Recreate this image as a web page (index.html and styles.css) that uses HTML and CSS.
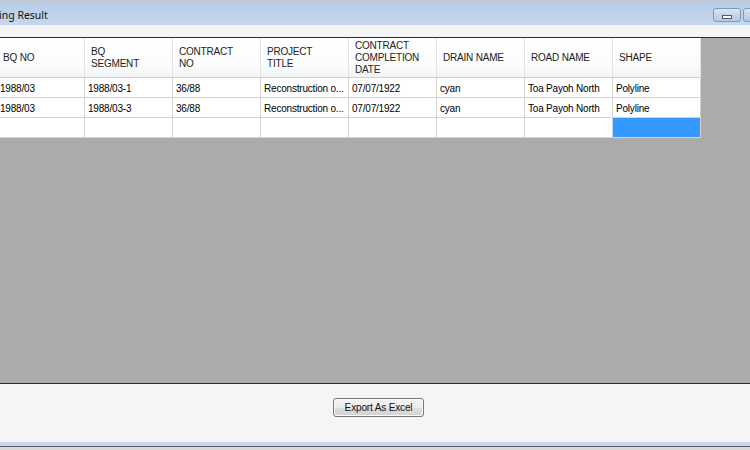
FILE: index.html
```html
<!DOCTYPE html>
<html>
<head>
<meta charset="utf-8">
<link rel="stylesheet" href="styles.css">
</head>
<body>
<div class="window">
  <div class="titlebar">
    <span class="title">ing Result</span>
    <div class="caption-btns">
      <span class="cbtn"><i class="min-glyph"></i></span>
      <span class="cbtn"></span>
    </div>
  </div>
  <div class="strip"></div>
  <div class="gridarea">
    <div class="grid">
      <div class="hcell">BQ NO</div>
      <div class="hcell">BQ<br>SEGMENT</div>
      <div class="hcell">CONTRACT<br>NO</div>
      <div class="hcell">PROJECT<br>TITLE</div>
      <div class="hcell">CONTRACT<br>COMPLETION<br>DATE</div>
      <div class="hcell">DRAIN NAME</div>
      <div class="hcell">ROAD NAME</div>
      <div class="hcell">SHAPE</div>

      <div class="cell">1988/03</div>
      <div class="cell">1988/03-1</div>
      <div class="cell">36/88</div>
      <div class="cell">Reconstruction o...</div>
      <div class="cell">07/07/1922</div>
      <div class="cell">cyan</div>
      <div class="cell">Toa Payoh North</div>
      <div class="cell">Polyline</div>

      <div class="cell">1988/03</div>
      <div class="cell">1988/03-3</div>
      <div class="cell">36/88</div>
      <div class="cell">Reconstruction o...</div>
      <div class="cell">07/07/1922</div>
      <div class="cell">cyan</div>
      <div class="cell">Toa Payoh North</div>
      <div class="cell">Polyline</div>

      <div class="cell"></div>
      <div class="cell"></div>
      <div class="cell"></div>
      <div class="cell"></div>
      <div class="cell"></div>
      <div class="cell"></div>
      <div class="cell"></div>
      <div class="cell selected"></div>
    </div>
  </div>
  <div class="panel">
    <button class="btn">Export As Excel</button>
  </div>
  <div class="band"></div>
  <div class="band-line"></div>
  <div class="below"></div>
</div>
</body>
</html>
```

FILE: styles.css
```css
html, body {
  margin: 0;
  padding: 0;
  width: 750px;
  height: 450px;
  overflow: hidden;
  background: #d6d6d6;
}

.window {
  width: 750px;
  height: 450px;
  display: flex;
  flex-direction: column;
  font-family: "Liberation Sans", Arial, sans-serif;
}

.titlebar {
  box-sizing: border-box;
  height: 25px;
  border-top: 2px solid #c3c8ce;
  background: linear-gradient(#b7cde7, #bfd3ea 60%, #c6d8ed);
  display: flex;
  align-items: center;
  justify-content: space-between;
  flex: none;
}

.title {
  font-family: "Noto Sans", "Open Sans", sans-serif;
  font-size: 10.5px;
  color: #111;
  margin-left: -1px;
  margin-top: 2px;
}

.caption-btns {
  display: flex;
  gap: 2px;
  margin-right: -21px;
  margin-top: 3px;
}

.cbtn {
  box-sizing: border-box;
  width: 28px;
  height: 14px;
  border: 1px solid #8298b4;
  border-radius: 3px;
  background: linear-gradient(#dbe6f3, #c3d4e9 50%, #b4c9e3);
  display: flex;
  align-items: center;
  justify-content: center;
}

.min-glyph {
  display: block;
  box-sizing: border-box;
  width: 10px;
  height: 4px;
  margin-top: 4px;
  background: #ffffff;
  border: 1px solid #4a5a70;
}

.strip {
  box-sizing: border-box;
  height: 13px;
  background: #f4f5f7;
  border-bottom: 1px solid #2b2b2b;
  flex: none;
}

.gridarea {
  height: 345px;
  background: #ababab;
  flex: none;
  overflow: hidden;
}

.grid {
  display: grid;
  grid-template-columns: repeat(8, 88px);
  grid-template-rows: 40px 20px 20px 20px;
  margin-left: -3px;
  width: 704px;
  font-size: 10px;
  letter-spacing: -0.2px;
  color: #000;
}

.hcell {
  box-sizing: border-box;
  background: linear-gradient(#ffffff, #fbfcfc 70%, #f1f3f5);
  border-right: 1px solid #e4e4e4;
  border-bottom: 1px solid #d0d0d0;
  display: flex;
  align-items: center;
  padding-left: 6px;
  padding-top: 1px;
  line-height: 12px;
  color: #222;
}

.cell {
  box-sizing: border-box;
  background: #fff;
  border-right: 1px solid #d2d2d2;
  border-bottom: 1px solid #d2d2d2;
  display: flex;
  align-items: center;
  padding-left: 3px;
  padding-top: 1px;
  white-space: nowrap;
  overflow: hidden;
}

.cell.selected {
  background: #3399ff;
}

.panel {
  box-sizing: border-box;
  height: 59px;
  border-top: 1px solid #2b2b2b;
  background: #f5f5f5;
  padding-top: 13px;
  padding-left: 333px;
  flex: none;
}

.btn {
  box-sizing: border-box;
  width: 91px;
  height: 19px;
  padding: 0;
  border: 1px solid #777;
  border-radius: 3px;
  background: linear-gradient(#f4f4f4, #ebebeb 50%, #dddddd 51%, #d3d3d3);
  font-family: "Liberation Sans", Arial, sans-serif;
  font-size: 10px;
  letter-spacing: -0.15px;
  color: #111;
  box-shadow: inset 0 0 0 1px #fcfcfc;
}

.band {
  height: 4px;
  background: #c4d7ed;
  flex: none;
}

.band-line {
  height: 1px;
  background: #5c5f63;
  flex: none;
}

.below {
  flex: 1;
  background: #d8d8d8;
}
```
